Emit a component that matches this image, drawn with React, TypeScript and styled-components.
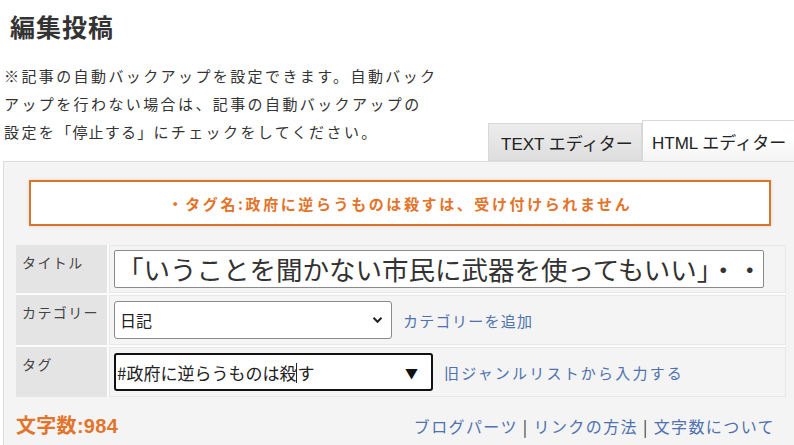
import React from 'react';
import styled, { createGlobalStyle } from 'styled-components';

const GlobalStyle = createGlobalStyle`
  html, body {
    margin: 0;
    padding: 0;
    overflow: hidden;
    background: #ffffff;
  }
  body {
    font-family: "Noto Sans CJK JP", "Liberation Sans", sans-serif;
    color: #333333;
  }
`;

const Page = styled.div`
  width: 794px;
  height: 445px;
  overflow: hidden;
`;

const Heading = styled.h1`
  margin: 11px 0 0 10px;
  font-size: 25px;
  line-height: 30px;
  font-weight: 700;
  color: #333333;
  letter-spacing: 1px;
`;

const HeaderRow = styled.div`
  display: flex;
  align-items: flex-end;
  margin-top: 21px;
`;

const Notice = styled.p`
  flex-shrink: 0;
  margin: 0 0 15px 4px;
  width: 484px;
  font-size: 15px;
  line-height: 28px;
  letter-spacing: 2.4px;
  white-space: nowrap;
  color: #333333;
`;

// the quoted part sits tighter than the rest of the notice
const Quoted = styled.span`
  letter-spacing: 1.2px;
`;

const Tabs = styled.div`
  display: flex;
  align-items: flex-end;
  flex-shrink: 0;
`;

const Tab = styled.div<{ $active?: boolean }>`
  box-sizing: border-box;
  flex-shrink: 0;
  height: ${(p) => (p.$active ? '41px' : '38px')};
  width: ${(p) => (p.$active ? '160px' : '154px')};
  padding: ${(p) => (p.$active ? '0 0 0 9px' : '0 0 0 12px')};
  display: flex;
  align-items: center;
  font-family: "Liberation Sans", "Noto Sans CJK JP", sans-serif;
  font-size: 17px;
  color: #222222;
  border: 1px solid #d8d8d8;
  border-bottom: ${(p) => (p.$active ? 'none' : '1px solid #d8d8d8')};
  background: ${(p) =>
    p.$active
      ? 'linear-gradient(#ffffff, #ffffff 40%, #f4f4f4)'
      : 'linear-gradient(#ececec, #dedede)'};
  white-space: nowrap;
`;

const Panel = styled.div`
  box-sizing: border-box;
  margin-left: 3px;
  width: 810px;
  min-height: 300px;
  border: 1px solid #dcdcdc;
  background: #f4f4f4;
  padding: 18px 0 0 12px;
`;

const ErrorBox = styled.div`
  box-sizing: border-box;
  margin-left: 13px;
  width: 742px;
  height: 46px;
  border: 2px solid #d6752d;
  background: #ffffff;
  box-shadow: 0 0 3px rgba(230, 150, 90, 0.35);
  display: flex;
  align-items: center;
  justify-content: center;
  font-size: 15px;
  font-weight: 700;
  letter-spacing: 2.6px;
  color: #e2742b;
`;

const FormGrid = styled.div`
  margin-top: 19px;
  width: 770px;
  display: grid;
  grid-template-columns: 91px 1fr;
  gap: 2px;
  background: #fbfbfb;
`;

const Label = styled.div<{ $h: number }>`
  box-sizing: border-box;
  height: ${(p) => p.$h}px;
  background: #e4e4e4;
  padding: 7px 0 0 6px;
  font-size: 14px;
  line-height: 20px;
  letter-spacing: 1.4px;
  color: #444444;
  white-space: nowrap;
`;

const Cell = styled.div<{ $h: number; $top: number }>`
  box-sizing: border-box;
  height: ${(p) => p.$h}px;
  background: #f4f4f4;
  border: 1px solid #e8e8e8;
  padding: ${(p) => p.$top - 1}px 0 0 4px;
  display: flex;
  align-items: flex-start;
  overflow: hidden;
`;

const TitleField = styled.div`
  box-sizing: border-box;
  width: 650px;
  height: 38px;
  border: 1px solid #8a8a8a;
  border-radius: 2px;
  background: #ffffff;
  padding: 0 0 0 2px;
  font-size: 26.5px;
  line-height: 36px;
  color: #333333;
  white-space: nowrap;
  overflow: hidden;
`;

const SelectBox = styled.div`
  box-sizing: border-box;
  width: 278px;
  height: 38px;
  border: 1px solid #8a8a8a;
  border-radius: 3px;
  background: #ffffff;
  padding: 0 8px 0 5px;
  display: flex;
  align-items: center;
  justify-content: space-between;
  font-size: 16px;
  color: #222222;
`;

const TagField = styled.div`
  box-sizing: border-box;
  width: 319px;
  height: 38px;
  border: 2px solid #111111;
  border-radius: 3px;
  background: #ffffff;
  padding: 0 13px 0 1px;
  display: flex;
  align-items: center;
  justify-content: space-between;
  font-size: 17px;
  color: #222222;
  white-space: nowrap;
`;

const Caret = styled.span`
  display: inline-block;
  width: 1px;
  height: 20px;
  background: #222222;
  vertical-align: -3px;
`;

const Arrow = styled.span`
  font-size: 13px;
  color: #111111;
`;

const SideLink = styled.a<{ $spacing: number }>`
  margin-left: 11px;
  height: 38px;
  display: flex;
  align-items: center;
  font-size: 15px;
  letter-spacing: ${(p) => p.$spacing}px;
  color: #4f72ae;
  text-decoration: none;
  white-space: nowrap;
`;

const Footer = styled.div`
  margin-top: 17px;
  width: 770px;
  display: flex;
  align-items: center;
  justify-content: space-between;
`;

const Count = styled.div`
  font-family: "Liberation Sans", "Noto Sans CJK JP", sans-serif;
  font-size: 20px;
  line-height: 24px;
  font-weight: 700;
  color: #e2742b;
  letter-spacing: 0.3px;
`;

const FooterLinks = styled.div`
  padding-right: 11px;
  font-size: 16px;
  line-height: 24px;
  letter-spacing: 1.4px;
  color: #333333;
  white-space: nowrap;
`;

const FooterLink = styled.a`
  color: #4f72ae;
  text-decoration: none;
`;

const Chevron = () => (
  <svg width="11" height="8" viewBox="0 0 11 8">
    <path d="M1.5 1.8 L5.5 5.8 L9.5 1.8" fill="none" stroke="#222" strokeWidth="2" />
  </svg>
);

const App: React.FC = () => {
  return (
    <Page>
      <GlobalStyle />
      <Heading>編集投稿</Heading>
      <HeaderRow>
        <Notice>
          ※記事の自動バックアップを設定できます。自動バック
          <br />
          アップを行わない場合は、記事の自動バックアップの
          <br />
          設定を<Quoted>「停止する」</Quoted>にチェックをしてください。
        </Notice>
        <Tabs>
          <Tab>TEXT エディター</Tab>
          <Tab $active>HTML エディター</Tab>
        </Tabs>
      </HeaderRow>
      <Panel>
        <ErrorBox>・タグ名:政府に逆らうものは殺すは、受け付けられません</ErrorBox>
        <FormGrid>
          <Label $h={48}>タイトル</Label>
          <Cell $h={48} $top={5}>
            <TitleField>「いうことを聞かない市民に武器を使ってもいい」・・・</TitleField>
          </Cell>
          <Label $h={50}>カテゴリー</Label>
          <Cell $h={50} $top={6}>
            <SelectBox>
              <span>日記</span>
              <Chevron />
            </SelectBox>
            <SideLink href="#" $spacing={1.3}>カテゴリーを追加</SideLink>
          </Cell>
          <Label $h={50}>タグ</Label>
          <Cell $h={50} $top={6}>
            <TagField>
              <span>
                #政府に逆らうものは殺<Caret />す
              </span>
              <Arrow>▼</Arrow>
            </TagField>
            <SideLink href="#" $spacing={2.2}>旧ジャンルリストから入力する</SideLink>
          </Cell>
        </FormGrid>
        <Footer>
          <Count>文字数:984</Count>
          <FooterLinks>
            <FooterLink href="#">ブログパーツ</FooterLink> | <FooterLink href="#">リンクの方法</FooterLink> |{' '}
            <FooterLink href="#">文字数について</FooterLink>
          </FooterLinks>
        </Footer>
      </Panel>
    </Page>
  );
};

export default App;
